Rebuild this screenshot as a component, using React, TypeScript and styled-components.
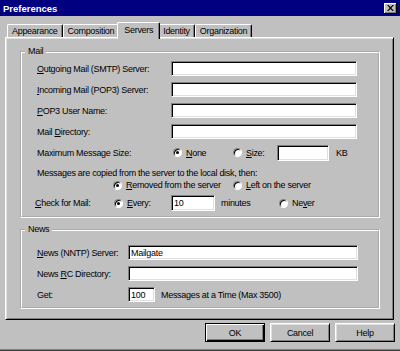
import React from 'react';
import styled, { createGlobalStyle } from 'styled-components';

const GlobalStyle = createGlobalStyle`
  html, body {
    margin: 0;
    padding: 0;
    background: #c0c0c0;
  }
  body {
    font-family: "Liberation Sans", Arial, sans-serif;
    font-size: 9px;
    letter-spacing: -0.3px;
    color: #000;
  }
`;

const Window = styled.div`
  width: 400px;
  height: 351px;
  box-sizing: border-box;
  background: #c0c0c0;
  display: flex;
  flex-direction: column;
  border-bottom: 1px solid #404040;
  box-shadow: inset 0 -1px 0 #808080;
`;

const TitleBar = styled.div`
  height: 16px;
  background: #000080;
  display: flex;
  align-items: center;
  justify-content: space-between;
  padding: 0 3px;
`;

const Title = styled.span`
  color: #fff;
  font-weight: bold;
  font-size: 9.5px;
  letter-spacing: 0;
`;

const CloseButton = styled.div`
  width: 13px;
  height: 11px;
  box-sizing: border-box;
  background: #c0c0c0;
  display: flex;
  align-items: center;
  justify-content: center;
  box-shadow: inset -1px -1px #000, inset 1px 1px #fff, inset -2px -2px #808080;
`;

const Body = styled.div`
  padding: 6px 0 0 5px;
`;

const TabStrip = styled.div`
  display: flex;
  align-items: flex-end;
  height: 15px;
  padding-left: 2px;
  position: relative;
  z-index: 1;
`;

const Tab = styled.div<{ $active?: boolean }>`
  position: relative;
  z-index: ${(p) => (p.$active ? 2 : 1)};
  box-sizing: border-box;
  height: ${(p) => (p.$active ? 17 : 13)}px;
  margin: ${(p) => (p.$active ? '0 -2px -2px' : '0')};
  padding: ${(p) => (p.$active ? '2px 6px 0' : '0 4px')};
  display: flex;
  align-items: ${(p) => (p.$active ? 'flex-start' : 'center')};
  background: #c0c0c0;
  border-left: 1px solid #fff;
  border-top: 1px solid #fff;
  border-right: 1px solid #000;
  border-radius: 2px 2px 0 0;
  box-shadow: inset -1px 0 #808080;
  white-space: nowrap;
`;

const Panel = styled.div`
  width: 389px;
  height: 283px;
  box-sizing: border-box;
  border: 1px solid;
  border-color: #fff #000 #000 #fff;
  box-shadow: inset 1px 1px #dfdfdf, inset -1px -1px #808080;
  padding: 13px 0 0 14px;
  display: flex;
  flex-direction: column;
  gap: 11px;
`;

const GroupBox = styled.div<{ $pt: number; $pb: number }>`
  position: relative;
  width: 360px;
  box-sizing: border-box;
  border: 2px groove #fff;
  padding: ${(p) => p.$pt}px 0 ${(p) => p.$pb}px 15px;
`;

const Legend = styled.span`
  position: absolute;
  top: -7px;
  left: 3px;
  padding: 0 3px;
  line-height: 11px;
  background: #c0c0c0;
`;

const Row = styled.div<{ $h?: number; $indent?: number; $mt?: number }>`
  display: flex;
  align-items: center;
  height: ${(p) => p.$h ?? 21}px;
  padding-left: ${(p) => Math.max(p.$indent ?? 0, 0)}px;
  margin-left: ${(p) => Math.min(p.$indent ?? 0, 0)}px;
  margin-top: ${(p) => p.$mt ?? 0}px;
  white-space: nowrap;
`;

const Label = styled.span<{ $w?: number; $ml?: number }>`
  display: inline-block;
  width: ${(p) => (p.$w ? `${p.$w}px` : 'auto')};
  margin-left: ${(p) => p.$ml ?? 0}px;
  flex-shrink: 0;
`;

const U = styled.span`
  text-decoration: underline;
`;

const TextField = styled.input<{ $w: number; $h?: number }>`
  width: ${(p) => p.$w}px;
  height: ${(p) => p.$h ?? 15}px;
  box-sizing: border-box;
  flex-shrink: 0;
  margin: 0;
  padding: 0 2px;
  border: 1px solid;
  border-color: #808080 #fff #fff #808080;
  box-shadow: inset 1px 1px #000, inset -1px -1px #dfdfdf;
  background: #fff;
  font: inherit;
  letter-spacing: inherit;
  color: #000;
  outline: none;
`;

const RadioLabel = styled.label<{ $w?: number }>`
  display: inline-flex;
  align-items: center;
  gap: 4px;
  width: ${(p) => (p.$w ? `${p.$w}px` : 'auto')};
  flex-shrink: 0;
`;

const RadioDot = styled.span<{ $checked?: boolean }>`
  position: relative;
  width: 9px;
  height: 9px;
  box-sizing: border-box;
  border-radius: 50%;
  background: #fff;
  border: 1px solid;
  border-color: #808080 #fff #fff #808080;
  box-shadow: inset 1px 1px #000;
  flex-shrink: 0;

  &::after {
    content: '';
    display: ${(p) => (p.$checked ? 'block' : 'none')};
    position: absolute;
    left: 2px;
    top: 2px;
    width: 3px;
    height: 3px;
    border-radius: 50%;
    background: #000;
  }
`;

const ButtonRow = styled.div`
  display: flex;
  justify-content: flex-end;
  gap: 5px;
  padding-right: 5px;
  margin-top: 3px;
`;

const Button = styled.button<{ $default?: boolean }>`
  width: 60px;
  height: 19px;
  box-sizing: border-box;
  margin: 0;
  padding: 0;
  background: #c0c0c0;
  font: inherit;
  letter-spacing: inherit;
  color: #000;
  border: 1px solid;
  border-color: ${(p) => (p.$default ? '#000' : '#fff #000 #000 #fff')};
  box-shadow: ${(p) =>
    p.$default
      ? 'inset 1px 1px #fff, inset -1px -1px #000, inset -2px -2px #808080'
      : 'inset 1px 1px #dfdfdf, inset -1px -1px #808080'};
`;

type RadioProps = { w?: number; checked?: boolean; children: React.ReactNode };

const Radio = ({ w, checked, children }: RadioProps) => (
  <RadioLabel $w={w}>
    <RadioDot $checked={checked} />
    <span>{children}</span>
  </RadioLabel>
);

const tabs = ['Appearance', 'Composition', 'Servers', 'Identity', 'Organization'];

export default function App() {
  return (
    <>
      <GlobalStyle />
      <Window>
        <TitleBar>
          <Title>Preferences</Title>
          <CloseButton>
            <svg width="7" height="6" viewBox="0 0 7 6">
              <path d="M0 0 L1.5 0 L3.5 2 L5.5 0 L7 0 L4.3 3 L7 6 L5.5 6 L3.5 4 L1.5 6 L0 6 L2.7 3 Z" fill="#000" />
            </svg>
          </CloseButton>
        </TitleBar>
        <Body>
          <TabStrip>
            {tabs.map((t) => (
              <Tab key={t} $active={t === 'Servers'}>
                {t}
              </Tab>
            ))}
          </TabStrip>
          <Panel>
            <GroupBox $pt={5} $pb={3}>
              <Legend>Mail</Legend>
              <Row>
                <Label $w={134}>
                  <U>O</U>utgoing Mail (SMTP) Server:
                </Label>
                <TextField $w={186} readOnly />
              </Row>
              <Row>
                <Label $w={134}>
                  <U>I</U>ncoming Mail (POP3) Server:
                </Label>
                <TextField $w={186} readOnly />
              </Row>
              <Row>
                <Label $w={134}>
                  <U>P</U>OP3 User Name:
                </Label>
                <TextField $w={186} readOnly />
              </Row>
              <Row>
                <Label $w={134}>
                  Mail <U>D</U>irectory:
                </Label>
                <TextField $w={186} readOnly />
              </Row>
              <Row>
                <Label $w={136}>Maximum Message Size:</Label>
                <Radio w={60} checked>
                  <U>N</U>one
                </Radio>
                <Radio w={44}>
                  <U>S</U>ize:
                </Radio>
                <TextField $w={52} $h={16} readOnly />
                <Label $ml={7}>KB</Label>
              </Row>
              <Row $h={12} $mt={4}>
                <Label>Messages are copied from the server to the local disk, then:</Label>
              </Row>
              <Row $h={12} $indent={76}>
                <Radio w={120} checked>
                  <U>R</U>emoved from the server
                </Radio>
                <Radio>
                  <U>L</U>eft on the server
                </Radio>
              </Row>
              <Row $h={20} $mt={2} $indent={-2}>
                <Label $w={79}>
                  <U>C</U>heck for Mail:
                </Label>
                <Radio w={57} checked>
                  <U>E</U>very:
                </Radio>
                <TextField $w={44} $h={16} defaultValue="10" readOnly />
                <Label $w={58} $ml={6}>
                  minutes
                </Label>
                <Radio>
                  Ne<U>v</U>er
                </Radio>
              </Row>
            </GroupBox>
            <GroupBox $pt={11} $pb={2}>
              <Legend>News</Legend>
              <Row>
                <Label $w={91}>
                  <U>N</U>ews (NNTP) Server:
                </Label>
                <TextField $w={230} defaultValue="Mailgate" readOnly />
              </Row>
              <Row>
                <Label $w={91}>
                  News <U>R</U>C Directory:
                </Label>
                <TextField $w={230} readOnly />
              </Row>
              <Row>
                <Label $w={91}>Get:</Label>
                <TextField $w={27} defaultValue="100" readOnly />
                <Label $ml={6}>Messages at a Time (Max 3500)</Label>
              </Row>
            </GroupBox>
          </Panel>
          <ButtonRow>
            <Button $default>OK</Button>
            <Button>Cancel</Button>
            <Button>Help</Button>
          </ButtonRow>
        </Body>
      </Window>
    </>
  );
}
